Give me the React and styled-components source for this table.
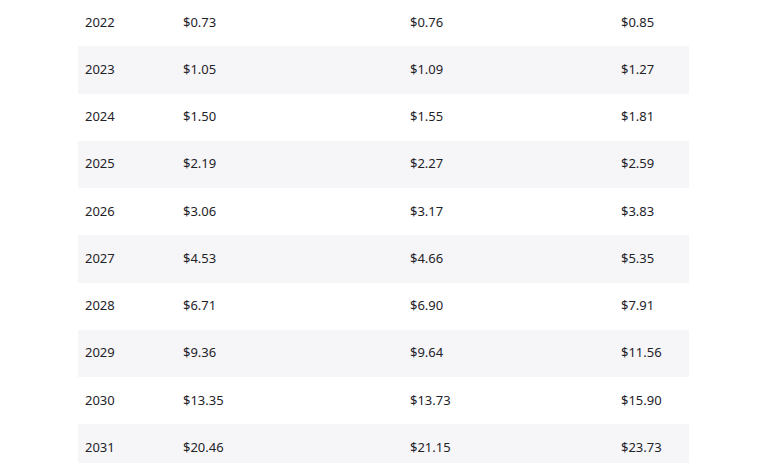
import React from "react";
import styled, { createGlobalStyle } from "styled-components";

const Global = createGlobalStyle`
  html, body { margin: 0; padding: 0; background: #ffffff; }
  body { font-family: "Noto Sans", "IBM Plex Sans", Arial, sans-serif; }
`;

const Page = styled.div`
  padding-left: 78px;
  margin-top: -1px;
  width: 611px;
`;

const Table = styled.div`
  display: flex;
  flex-direction: column;
`;

const Row = styled.div`
  display: grid;
  grid-template-columns: 98px 227px 211px 1fr;
  align-items: center;
  height: 47.25px;
  background: ${(p) => (p.$striped ? "#f6f6f8" : "#ffffff")};
`;

const Cell = styled.div`
  padding-left: 7px;
  padding-bottom: 2px;
  font-size: 13px;
  line-height: 18px;
  color: #1e2329;
  white-space: nowrap;
`;

const data = [
  ["2022", "$0.73", "$0.76", "$0.85"],
  ["2023", "$1.05", "$1.09", "$1.27"],
  ["2024", "$1.50", "$1.55", "$1.81"],
  ["2025", "$2.19", "$2.27", "$2.59"],
  ["2026", "$3.06", "$3.17", "$3.83"],
  ["2027", "$4.53", "$4.66", "$5.35"],
  ["2028", "$6.71", "$6.90", "$7.91"],
  ["2029", "$9.36", "$9.64", "$11.56"],
  ["2030", "$13.35", "$13.73", "$15.90"],
  ["2031", "$20.46", "$21.15", "$23.73"],
];

export default function App() {
  return (
    <>
      <Global />
      <Page>
        <Table>
          {data.map((r, i) => (
            <Row key={r[0]} $striped={i % 2 === 1}>
              {r.map((c, j) => (
                <Cell key={j}>{c}</Cell>
              ))}
            </Row>
          ))}
        </Table>
      </Page>
    </>
  );
}
